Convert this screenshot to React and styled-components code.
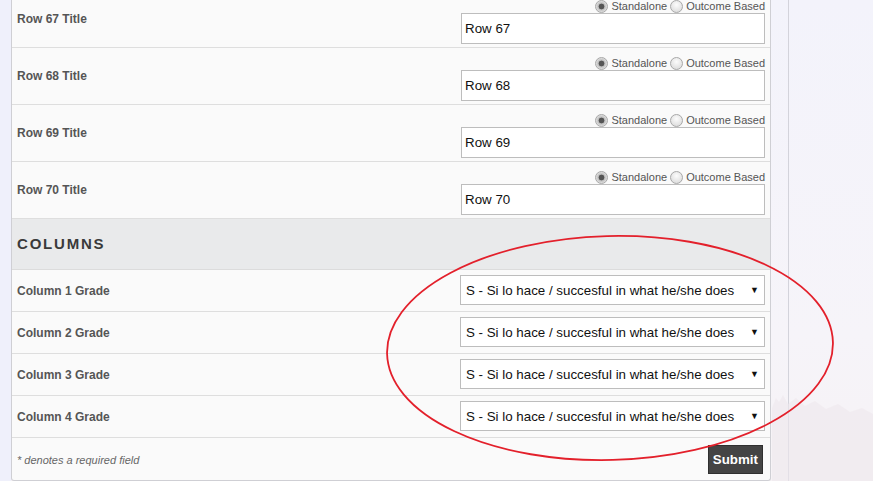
import React from "react";
import styled, { createGlobalStyle } from "styled-components";

const Global = createGlobalStyle`
  html, body { margin: 0; padding: 0; height: 100%; overflow: hidden; }
  body {
    font-family: "Liberation Sans", Arial, sans-serif;
    background: linear-gradient(180deg, #f3f3fb 0%, #f6f4f9 70%, #f6f2f5 100%);
  }
`;

const Page = styled.div`
  position: relative;
  width: 873px;
  height: 481px;
  overflow: hidden;
  display: flex;
  align-items: flex-start;
`;

const LeftGutter = styled.div`
  width: 11px;
  flex: none;
  align-self: stretch;
  background: #eff0fb;
`;

const Panel = styled.div`
  position: relative;
  z-index: 1;
  width: 758px;
  flex: none;
  margin-top: -9px;
  background: #fafafa;
  border-left: 1px solid #cfcfd4;
  border-right: 1px solid #cfcfd4;
  border-bottom: 1px solid #cfcfd4;
  border-radius: 0 0 3px 3px;
`;

const SideLine = styled.div`
  margin-left: 17px;
  width: 1px;
  align-self: stretch;
  background: #d3d3db;
`;

const RowItem = styled.div`
  display: flex;
  justify-content: space-between;
  align-items: center;
  height: 56px;
  padding: 0 5px;
  border-bottom: 1px solid #dedede;
`;

const Label = styled.div`
  font-size: 12px;
  font-weight: bold;
  color: #555;
`;

const RightBlock = styled.div`
  width: 304px;
  align-self: flex-start;
  padding-top: 7px;
  display: flex;
  flex-direction: column;
  align-items: flex-end;
`;

const RadioLine = styled.div`
  display: flex;
  align-items: center;
  height: 14px;
  font-size: 11px;
  color: #555;
  padding-top: 1px;
`;

const RadioCircle = styled.span`
  display: inline-block;
  box-sizing: border-box;
  width: 13px;
  height: 13px;
  border-radius: 50%;
  border: 1px solid #a8a8a8;
  background: ${(p) =>
    p.checked
      ? "radial-gradient(circle, #555 0 2.6px, #bcbcbc 3.2px, #e8e8e8 6px)"
      : "radial-gradient(circle at 50% 35%, #fcfcfc, #d6d6d6)"};
  margin: 0 3px 0 3px;
`;

const TextBox = styled.div`
  box-sizing: border-box;
  width: 304px;
  height: 31px;
  border: 1px solid #bdbdbd;
  background: #fff;
  font-size: 13.33px;
  color: #111;
  display: flex;
  align-items: center;
  padding-left: 3px;
`;

const SectionHeader = styled.div`
  height: 48px;
  display: flex;
  align-items: center;
  padding: 0 0 2px 5px;
  background: #e9eaeb;
  border-bottom: 1px solid #dcdcdc;
  font-size: 15px;
  font-weight: bold;
  letter-spacing: 1.8px;
  color: #3a3a3a;
`;

const GradeRow = styled.div`
  display: flex;
  justify-content: space-between;
  align-items: center;
  height: 41px;
  padding: 0 5px;
  border-bottom: 1px solid #dedede;
`;

const SelectBox = styled.div`
  box-sizing: border-box;
  width: 305px;
  height: 30px;
  margin-top: -1px;
  border: 1px solid #bdbdbd;
  background: #fff;
  display: flex;
  align-items: center;
  justify-content: space-between;
  padding: 0 5px 0 5px;
  font-size: 13.33px;
  color: #111;
  white-space: nowrap;
`;

const Arrow = styled.span`
  font-size: 9px;
  color: #111;
`;

const Footer = styled.div`
  height: 42px;
  display: flex;
  justify-content: space-between;
  align-items: center;
  padding: 0 7px 0 5px;
`;

const Note = styled.div`
  font-size: 11px;
  font-style: italic;
  color: #666;
  padding-top: 1px;
`;

const SubmitButton = styled.button`
  font-family: "Liberation Sans", Arial, sans-serif;
  font-size: 13.33px;
  font-weight: bold;
  color: #fff;
  background: #444;
  border: 1px solid #2f2f2f;
  height: 29px;
  padding: 0 4px;
  margin-top: 1px;
`;

const Overlay = styled.svg`
  position: absolute;
  left: 0;
  top: 0;
  pointer-events: none;
  z-index: ${(p) => p.$z};
`;

const rows = [67, 68, 69, 70];
const grades = [1, 2, 3, 4];

export default function App() {
  return (
    <>
      <Global />
      <Page>
        <Overlay width="873" height="481" $z={0}>
          <path
            d="M772 408 L776 398 L779 402 L783 395 L788 404 L796 398 L805 406 L815 401 L826 409 L838 404 L850 412 L862 408 L873 414 L873 481 L772 481 Z"
            fill="#efe7ed"
            opacity="0.6"
          />
        </Overlay>
        <LeftGutter />
        <Panel>
          {rows.map((n) => (
            <RowItem key={n}>
              <Label>Row {n} Title</Label>
              <RightBlock>
                <RadioLine>
                  <RadioCircle checked />
                  Standalone
                  <RadioCircle />
                  Outcome Based
                </RadioLine>
                <TextBox>Row {n}</TextBox>
              </RightBlock>
            </RowItem>
          ))}
          <SectionHeader>COLUMNS</SectionHeader>
          {grades.map((n) => (
            <GradeRow key={n}>
              <Label>Column {n} Grade</Label>
              <SelectBox>
                <span>S - Si lo hace / succesful in what he/she does</span>
                <Arrow>▼</Arrow>
              </SelectBox>
            </GradeRow>
          ))}
          <Footer>
            <Note>* denotes a required field</Note>
            <SubmitButton>Submit</SubmitButton>
          </Footer>
        </Panel>
        <SideLine />
        <Overlay width="873" height="481" $z={2}>
          <ellipse
            cx="610"
            cy="348"
            rx="223"
            ry="112"
            fill="none"
            stroke="#e3202b"
            strokeWidth="1.8"
            transform="rotate(-1.5 610 348)"
          />
        </Overlay>
      </Page>
    </>
  );
}
